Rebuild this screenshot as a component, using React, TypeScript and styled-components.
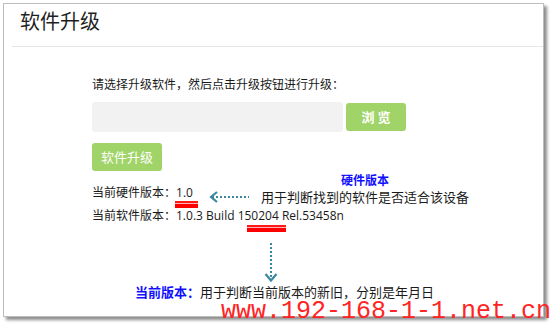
import React from 'react';
import styled, { createGlobalStyle } from 'styled-components';

const Global = createGlobalStyle`
  html, body { margin: 0; padding: 0; background: #fff; }
  body { font-family: "Open Sans", "Noto Sans CJK SC", sans-serif; color: #1a1a1a; }
`;

const Page = styled.div`
  position: relative;
  width: 554px;
  height: 326px;
  padding: 3px 0 0 3px;
  box-sizing: border-box;
  overflow: hidden;
`;

const Frame = styled.div`
  position: relative;
  width: 541px;
  height: 314px;
  box-sizing: border-box;
  border: 1px solid #bdbdbd;
  background: #fff;
  box-shadow: 3px 3px 3px rgba(0, 0, 0, 0.45);
`;

const Header = styled.div`
  height: 42px;
  margin-left: 8px;
  padding-left: 8px;
  border-bottom: 1px solid #e6e6e6;
  font-family: "Noto Sans CJK SC", sans-serif;
  font-size: 20px;
  line-height: 34px;
  color: #1f1f1f;
`;

const Body = styled.div`
  padding: 29px 0 0 88px;
`;

const Hint = styled.div`
  font-size: 12px;
  line-height: 18px;
`;

const FileRow = styled.div`
  display: flex;
  align-items: center;
  gap: 3px;
  margin-top: 8px;
`;

const FileInput = styled.div`
  width: 251px;
  height: 30px;
  background: #f2f2f2;
  border-radius: 3px;
`;

const GreenButton = styled.button<{ $w: number; $bold?: boolean }>`
  width: ${(p) => p.$w}px;
  height: 28px;
  border: none;
  border-radius: 3px;
  padding: 0;
  background: #a0d468;
  color: #fff;
  font-family: "Noto Sans CJK SC", sans-serif;
  font-size: 13px;
  font-weight: ${(p) => (p.$bold ? 700 : 400)};
  line-height: 28px;
  white-space: pre;
`;

const UpgradeWrap = styled.div`
  margin-top: 11px;
`;

const Versions = styled.div`
  margin-top: 10px;
`;

const VersionLine = styled.div`
  font-size: 12px;
  line-height: 23px;
  white-space: nowrap;
`;

const Mark = styled.span<{ $left: number; $width: number; $top: number }>`
  position: relative;
  display: inline-block;
  line-height: 23px;
  &::after {
    content: '';
    position: absolute;
    left: ${(p) => p.$left}px;
    top: ${(p) => p.$top}px;
    width: ${(p) => p.$width}px;
    height: 7px;
    background: linear-gradient(#ff1a1a 0 2px, #ffb0b0 2px 3px, #ff0000 3px 7px);
  }
`;

const ArrowBox = styled.svg<{ $x: number; $y: number }>`
  position: absolute;
  left: ${(p) => p.$x}px;
  top: ${(p) => p.$y}px;
  overflow: visible;
`;

const Callout = styled.div`
  position: absolute;
  left: 257px;
  top: 170px;
  display: flex;
  flex-direction: column;
  align-items: center;
`;

const CalloutTitle = styled.div`
  font-size: 12px;
  line-height: 14px;
  font-weight: 700;
  color: #1010ff;
`;

const CalloutText = styled.div`
  font-size: 13px;
  line-height: 18px;
  white-space: nowrap;
`;

const Note = styled.div`
  position: absolute;
  left: 131px;
  top: 279px;
  font-size: 13px;
  line-height: 18px;
  white-space: nowrap;
`;

const NoteLabel = styled.span`
  font-weight: 700;
  color: #1010ff;
`;

const Watermark = styled.div`
  position: absolute;
  left: 221px;
  top: 303px;
  font-family: "Liberation Mono", "Courier New", monospace;
  font-size: 25px;
  line-height: 18px;
  color: #ff2424;
  white-space: nowrap;
`;

const TEAL = '#3b88a2';

export default function App() {
  return (
    <Page>
      <Global />
      <Frame>
        <Header>软件升级</Header>
        <Body>
          <Hint>请选择升级软件，然后点击升级按钮进行升级：</Hint>
          <FileRow>
            <FileInput />
            <GreenButton $w={60} $bold>浏 览</GreenButton>
          </FileRow>
          <UpgradeWrap>
            <GreenButton $w={70}>软件升级</GreenButton>
          </UpgradeWrap>
          <Versions>
            <VersionLine>
              当前硬件版本：<Mark $left={-1} $width={23} $top={20}>1.0</Mark>
            </VersionLine>
            <VersionLine>
              当前软件版本：1.0.3 Build <Mark $left={9} $width={39} $top={21}>150204</Mark> Rel.53458n
            </VersionLine>
          </Versions>
        </Body>

        <ArrowBox $x={205} $y={187} width={40} height={12} viewBox="0 0 40 12">
          <path d="M8 1 L2 6 L8 11" fill="none" stroke={TEAL} strokeWidth={2.2} />
          <line x1={3} y1={6} x2={40} y2={6} stroke={TEAL} strokeWidth={2} strokeDasharray="2 2" />
        </ArrowBox>
        <Callout>
          <CalloutTitle>硬件版本</CalloutTitle>
          <CalloutText>用于判断找到的软件是否适合该设备</CalloutText>
        </Callout>

        <ArrowBox $x={260} $y={238} width={14} height={40} viewBox="0 0 14 40">
          <line x1={7} y1={1} x2={7} y2={38} stroke={TEAL} strokeWidth={2} strokeDasharray="2 2" />
          <path d="M1.5 32 L7 38.5 L12.5 32" fill="none" stroke={TEAL} strokeWidth={2.2} />
        </ArrowBox>
        <Note>
          <NoteLabel>当前版本：</NoteLabel>用于判断当前版本的新旧，分别是年月日
        </Note>
      </Frame>
      <Watermark>www.192-168-1-1.net.cn</Watermark>
    </Page>
  );
}
